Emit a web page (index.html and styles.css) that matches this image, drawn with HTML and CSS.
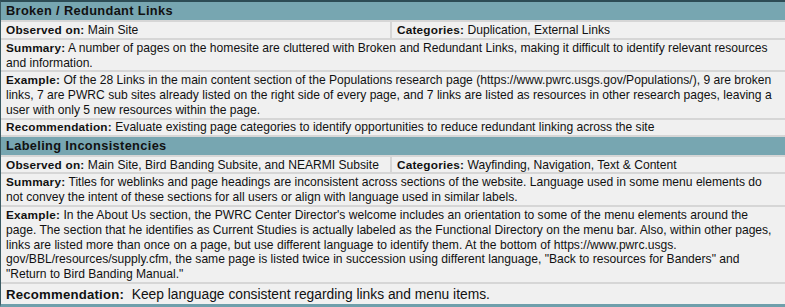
FILE: index.html
```html
<!DOCTYPE html>
<html>
<head>
<meta charset="utf-8">
<link rel="stylesheet" href="styles.css">
</head>
<body>
<div class="report">
  <div class="head">Broken / Redundant Links</div>
  <div class="split">
    <div class="cell"><b>Observed on:</b> Main Site</div>
    <div class="cell"><b>Categories:</b> Duplication, External Links</div>
  </div>
  <div class="cell"><span class="ln"><b>Summary:</b> A number of pages on the homesite are cluttered with Broken and Redundant Links, making it difficult to identify relevant resources</span><span class="ln">and information.</span></div>
  <div class="cell"><span class="ln"><b>Example:</b> Of the 28 Links in the main content section of the Populations research page (https://www.pwrc.usgs.gov/Populations/), 9 are broken</span><span class="ln">links, 7 are PWRC sub sites already listed on the right side of every page, and 7 links are listed as resources in other research pages, leaving a</span><span class="ln">user with only 5 new resources within the page.</span></div>
  <div class="cell tight"><span class="ln"><b>Recommendation:</b> Evaluate existing page categories to identify opportunities to reduce redundant linking across the site</span></div>
  <div class="head">Labeling Inconsistencies</div>
  <div class="split">
    <div class="cell"><b>Observed on:</b> Main Site, Bird Banding Subsite, and NEARMI Subsite</div>
    <div class="cell"><b>Categories:</b> Wayfinding, Navigation, Text &amp; Content</div>
  </div>
  <div class="cell"><span class="ln"><b>Summary:</b> Titles for weblinks and page headings are inconsistent across sections of the website. Language used in some menu elements do</span><span class="ln">not convey the intent of these sections for all users or align with language used in similar labels.</span></div>
  <div class="cell"><span class="ln"><b>Example:</b> In the About Us section, the PWRC Center Director's welcome includes an orientation to some of the menu elements around the</span><span class="ln">page. The section that he identifies as Current Studies is actually labeled as the Functional Directory on the menu bar. Also, within other pages,</span><span class="ln">links are listed more than once on a page, but use different language to identify them. At the bottom of https://www.pwrc.usgs.</span><span class="ln">gov/BBL/resources/supply.cfm, the same page is listed twice in succession using different language, "Back to resources for Banders" and</span><span class="ln">"Return to Bird Banding Manual."</span></div>
  <div class="cell big"><span class="ln"><b>Recommendation:</b>&nbsp; Keep language consistent regarding links and menu items.</span></div>
</div>
</body>
</html>
```
FILE: styles.css
```css
html, body { margin: 0; padding: 0; background: #ffffff; }
.report {
  width: 785px;
  height: 307px;
  box-sizing: border-box;
  border-top: 2px solid #2d4c55;
  border-left: 1px solid #3a5a63;
  border-bottom: 3px solid #6f9fab;
  font-family: "Liberation Sans", Arial, sans-serif;
  font-size: 12.1px;
  line-height: 14.8px;
  color: #111;
  display: flex;
  flex-direction: column;
  gap: 2px;
  background: #d6d6d6;
  overflow: hidden;
}
.head {
  background: #77a6b1;
  font-weight: bold;
  font-size: 12.8px;
  letter-spacing: 0.35px;
  padding: 1px 5px 1px;
  height: 16px;
  line-height: 16px;
}
.split {
  display: grid;
  grid-template-columns: 389px 1fr;
  gap: 2px;
}
.cell {
  background: #f0f0f0;
  padding: 1px 5px 0;
  white-space: nowrap;
  overflow: hidden;
}
.cell.tight {
  padding-top: 0;
}
.ln { display: block; }
.cell b {
  font-size: 11.8px;
  letter-spacing: 0.2px;
}
.cell.big {
  flex: 1;
  font-size: 13.8px;
  line-height: 16px;
  padding-top: 3px;
}
.cell.big b {
  font-size: 13.2px;
}
```
